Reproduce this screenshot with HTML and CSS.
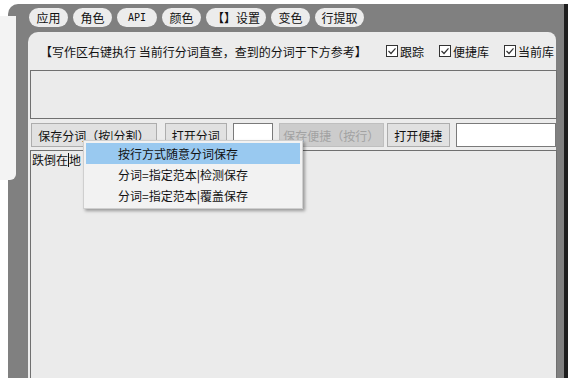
FILE: index.html
```html
<!DOCTYPE html>
<html lang="zh">
<head>
  <meta charset="UTF-8" />
  <meta name="viewport" content="width=device-width, initial-scale=1.0"/>
  <title>分词工具</title>
  <link rel="stylesheet" href="styles.css">
</head>
<body>

  <div class="side-panel"></div>

  <div class="window">
    <div class="toolbar">
      <span class="pill">应用</span>
      <span class="pill">角色</span>
      <span class="pill pill-api">API</span>
      <span class="pill">颜色</span>
      <span class="pill pill-set">【】设置</span>
      <span class="pill">变色</span>
      <span class="pill pill-three">行提取</span>
    </div>

    <div class="panel">
      <div class="header">
        <span class="hint">【写作区右键执行 当前行分词直查，查到的分词于下方参考】</span>
        <div class="checks">
          <label class="check"><svg width="12" height="12" viewBox="0 0 12 12"><rect x="0.5" y="0.5" width="11" height="11" fill="#fff" stroke="#333"/><path d="M2.5 6 L5 8.5 L9.5 3.3" fill="none" stroke="#333" stroke-width="1.2"/></svg>跟踪</label>
          <label class="check"><svg width="12" height="12" viewBox="0 0 12 12"><rect x="0.5" y="0.5" width="11" height="11" fill="#fff" stroke="#333"/><path d="M2.5 6 L5 8.5 L9.5 3.3" fill="none" stroke="#333" stroke-width="1.2"/></svg>便捷库</label>
          <label class="check"><svg width="12" height="12" viewBox="0 0 12 12"><rect x="0.5" y="0.5" width="11" height="11" fill="#fff" stroke="#333"/><path d="M2.5 6 L5 8.5 L9.5 3.3" fill="none" stroke="#333" stroke-width="1.2"/></svg>当前库</label>
        </div>
      </div>

      <div class="result-box"></div>

      <div class="actions">
        <button class="btn btn-save">保存分词（按|分割）</button>
        <button class="btn btn-open">打开分词</button>
        <input class="field field-small" type="text">
        <button class="btn btn-disabled">保存便捷（按行）</button>
        <button class="btn btn-open2">打开便捷</button>
        <input class="field field-wide" type="text">
      </div>

      <div class="editor">跌倒在<span class="caret"></span>地</div>
    </div>

    <ul class="menu">
      <li class="active">按行方式随意分词保存</li>
      <li>分词=指定范本|检测保存</li>
      <li>分词=指定范本|覆盖保存</li>
    </ul>
  </div>

</body>
</html>
```

FILE: styles.css
```css
body {
  margin: 0;
  background: #fff;
  font-family: "Noto Sans CJK SC", "DejaVu Sans", sans-serif;
  font-size: 12px;
  color: #111;
  overflow: hidden;
}

.side-panel {
  position: absolute;
  left: 0;
  top: 16px;
  width: 16px;
  height: 164px;
  background: #f3f3f3;
  border-radius: 0 0 6px 0;
  z-index: 2;
}

.window {
  position: relative;
  margin: 4px 0 0 8px;
  width: 560px;
  height: 374px;
  background: #808080;
  border-right: 4px solid #1e1e1e;
  border-radius: 10px 0 0 0;
  padding: 4px 0 0 20px;
  box-sizing: border-box;
  display: flex;
  flex-direction: column;
}

.toolbar {
  display: flex;
  gap: 5px;
  height: 19px;
  margin-left: 1px;
  margin-bottom: 5px;
}

.pill {
  background: #ececec;
  border-radius: 10px;
  width: 39px;
  text-align: center;
  line-height: 19px;
  height: 19px;
}

.pill-api {
  width: 40px;
  font-family: "DejaVu Sans Mono", monospace;
  font-size: 10px;
}

.pill-set {
  width: 60px;
}

.pill-three {
  width: 49px;
}

.panel {
  width: 528px;
  flex: 1;
  background: #ececec;
  border-radius: 10px 8px 0 0;
  display: flex;
  flex-direction: column;
}

.header {
  display: flex;
  align-items: center;
  height: 38px;
  padding-left: 12px;
}

.hint {
  width: 334px;
  white-space: nowrap;
}

.checks {
  display: flex;
  gap: 15px;
  margin-left: 12px;
}

.check {
  display: flex;
  align-items: center;
  gap: 2px;
}

.result-box {
  margin-left: 2px;
  width: 527px;
  height: 49px;
  border: 1px solid #707070;
  box-sizing: border-box;
  background: #ebebeb;
}

.actions {
  display: flex;
  align-items: center;
  margin: 4px 0 0 3px;
  height: 24px;
}

.btn {
  font-family: inherit;
  font-size: 12px;
  height: 24px;
  padding: 0;
  background: #e1e1e1;
  border: 1px solid #adadad;
  color: #111;
}

.btn-save {
  width: 127px;
}

.btn-open {
  width: 63px;
  margin-left: 8px;
}

.field {
  height: 24px;
  box-sizing: border-box;
  border: 1px solid #7a7a7a;
  background: #fff;
  padding: 0;
}

.field-small {
  width: 40px;
  margin-left: 6px;
}

.btn-disabled {
  width: 106px;
  margin-left: 6px;
  background: #cccccc;
  border-color: #bfbfbf;
  color: #a2a2a2;
}

.btn-open2 {
  width: 64px;
  margin-left: 3px;
}

.field-wide {
  width: 100px;
  margin-left: 6px;
}

.editor {
  margin: 3px 0 0 2px;
  width: 527px;
  flex: 1;
  border: 1px solid #707070;
  border-bottom: none;
  box-sizing: border-box;
  background: #ebebeb;
  padding: 1px 0 0 1px;
  line-height: 16px;
}

.caret {
  display: inline-block;
  width: 1px;
  height: 14px;
  background: #111;
  vertical-align: -2px;
}

.menu {
  position: absolute;
  left: 75px;
  top: 136px;
  width: 220px;
  margin: 0;
  padding: 2px;
  box-sizing: border-box;
  list-style: none;
  background: #f2f2f2;
  border: 1px solid #cfcfcf;
  box-shadow: 2px 2px 3px rgba(0, 0, 0, 0.35);
}

.menu li {
  height: 21px;
  line-height: 21px;
  padding-left: 32px;
}

.menu li.active {
  background: #99c9f0;
}
```
